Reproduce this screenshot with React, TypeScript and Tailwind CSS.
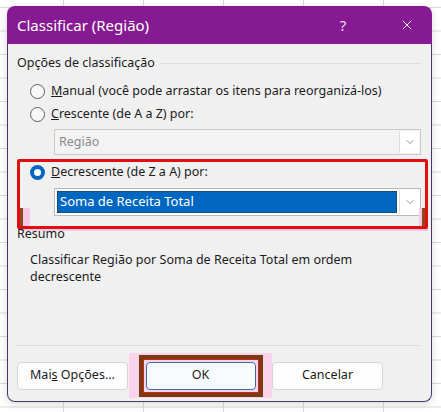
import { ChevronDown, X } from "lucide-react";

const font = { fontFamily: '"Noto Sans", "Open Sans", sans-serif' };

function Radio({ checked }: { checked?: boolean }) {
  if (checked) {
    return (
      <span className="w-[15px] h-[15px] rounded-full bg-[#0067c0] flex items-center justify-center shrink-0">
        <span className="w-[7px] h-[7px] rounded-full bg-white" />
      </span>
    );
  }
  return <span className="w-[15px] h-[15px] rounded-full border border-[#5f5f5f] bg-[#f7f7f7] shrink-0" />;
}

function DropButton() {
  return (
    <div className="w-[20px] self-stretch my-[1px] mr-[1px] bg-white border-l border-[#dcdcdc] flex items-center justify-center">
      <ChevronDown className="w-[12px] h-[12px] text-[#6b6b6b]" strokeWidth={1.5} />
    </div>
  );
}

export default function App() {
  return (
    <div
      className="relative w-[441px] h-[412px] overflow-hidden bg-white bg-[linear-gradient(to_right,#dadada_1px,transparent_1px),linear-gradient(to_bottom,#dadada_1px,transparent_1px)] bg-[size:80px_23.5px] bg-[position:63px_7px]"
      style={font}
    >
      {/* Dialog */}
      <div className="absolute left-[7px] top-[6px] w-[425px] h-[396px] flex flex-col rounded-lg shadow-[0_2px_8px_rgba(0,0,0,0.15)]">
        {/* Title bar */}
        <div className="h-[38px] bg-[#861a93] rounded-t-lg flex items-center pl-[10px] text-white">
          <span className="text-[15px] flex-1 pt-[1px]">Classificar (Região)</span>
          <span className="text-[15px] w-[20px] text-center mr-[46px] text-[#f0dff3]">?</span>
          <X className="w-[16px] h-[16px] mr-[17px] text-[#f4e6f6]" strokeWidth={1.5} />
        </div>

        {/* Body */}
        <div className="flex-1 flex flex-col bg-[#f1f0f1] border border-t-0 border-[#4a3569] rounded-b-lg pl-[9px] pr-[10px] text-[12.5px] text-[#1b1b1b]">
          {/* Group header */}
          <div className="flex items-center h-[16px] mt-[11px]">
            <span>Opções de classificação</span>
            <div className="flex-1 h-px bg-[#dddddd] ml-[6px] mt-[1px]" />
          </div>

          <div className="flex items-center gap-[6px] ml-[13px] mt-[11px] h-[18px]">
            <Radio />
            <span>
              <u>M</u>anual (você pode arrastar os itens para reorganizá-los)
            </span>
          </div>
          <div className="flex items-center gap-[6px] ml-[13px] mt-[5px] h-[18px]">
            <Radio />
            <span>
              <u>C</u>rescente (de A a Z) por:
            </span>
          </div>

          <div className="ml-[37px] mt-[6px] h-[26px] flex border border-[#c9c9c9] bg-[#f3f3f3]">
            <span className="flex-1 pl-[4px] flex items-center text-[#8a8a8a]">Região</span>
            <DropButton />
          </div>

          {/* Highlighted section */}
          <div className="relative mt-[4px] -mr-[7px] h-[70px] border-[3px] border-[#e20d0d] rounded-[2px] pl-[10px] pr-[4px]">
            <div className="flex items-center gap-[6px] mt-[1px] h-[18px]">
              <Radio checked />
              <span>
                <u>D</u>ecrescente (de Z a A) por:
              </span>
            </div>
            <div className="ml-[24px] mt-[7px] h-[28px] flex border border-[#b9b9b9] bg-white">
              <div className="flex-1 m-[2px] border border-dotted border-[#333] bg-[#0067c0] text-white text-[13px] flex items-center pl-[2px]">
                Soma de Receita Total
              </div>
              <DropButton />
            </div>
            <div className="absolute left-[0px] bottom-0 w-[10px] h-[18px] bg-[#f7c8e6]">
              <div className="w-[3px] h-full bg-[#8a4a1e]" />
            </div>
            <div className="absolute right-0 bottom-0 w-[6px] h-[18px] bg-[#f7c8e6] flex justify-end">
              <div className="w-[3px] h-full bg-[#8a4a1e]" />
            </div>
          </div>

          <div className="h-[3px] -mt-[1px] ml-[4px] -mr-[7px] bg-[#f7c6e4]" />

          <div className="h-[14px] leading-[14px] -mt-[4px]">Resumo</div>
          <div className="ml-[13px] mt-[10px] leading-[17px]">
            Classificar Região por Soma de Receita Total em ordem
            <br />
            decrescente
          </div>

          <div className="flex-1" />
          <div className="h-px bg-[#dcdcdc] mr-[1px]" />

          {/* Buttons */}
          <div className="flex items-center h-[45px] mb-[3px] mt-[7px]">
            <button className="w-[111px] h-[28px] bg-[#fdfdfd] border border-[#d5d5d5] rounded-[4px] text-[#1b1b1b]">
              Mai<u>s</u> Opções...
            </button>
            <div className="ml-[1px] w-[143px] h-[45px] bg-[#f9d3ec] flex items-center justify-center">
              <div className="w-[124px] h-[42px] border-[4px] border-[#7a3a12] p-[1px] bg-[#c42a1a]">
                <div className="w-full h-full bg-[#f9d3ec] p-[2px]">
                  <button className="w-full h-full bg-[#f8fbfe] border border-[#3f6aa0] rounded-[4px] text-[#1b1b1b]">
                    OK
                  </button>
                </div>
              </div>
            </div>
            <button className="w-[111px] h-[28px] bg-[#fdfdfd] border border-[#d5d5d5] rounded-[4px] text-[#1b1b1b]">
              Cancelar
            </button>
          </div>
        </div>
      </div>
    </div>
  );
}
